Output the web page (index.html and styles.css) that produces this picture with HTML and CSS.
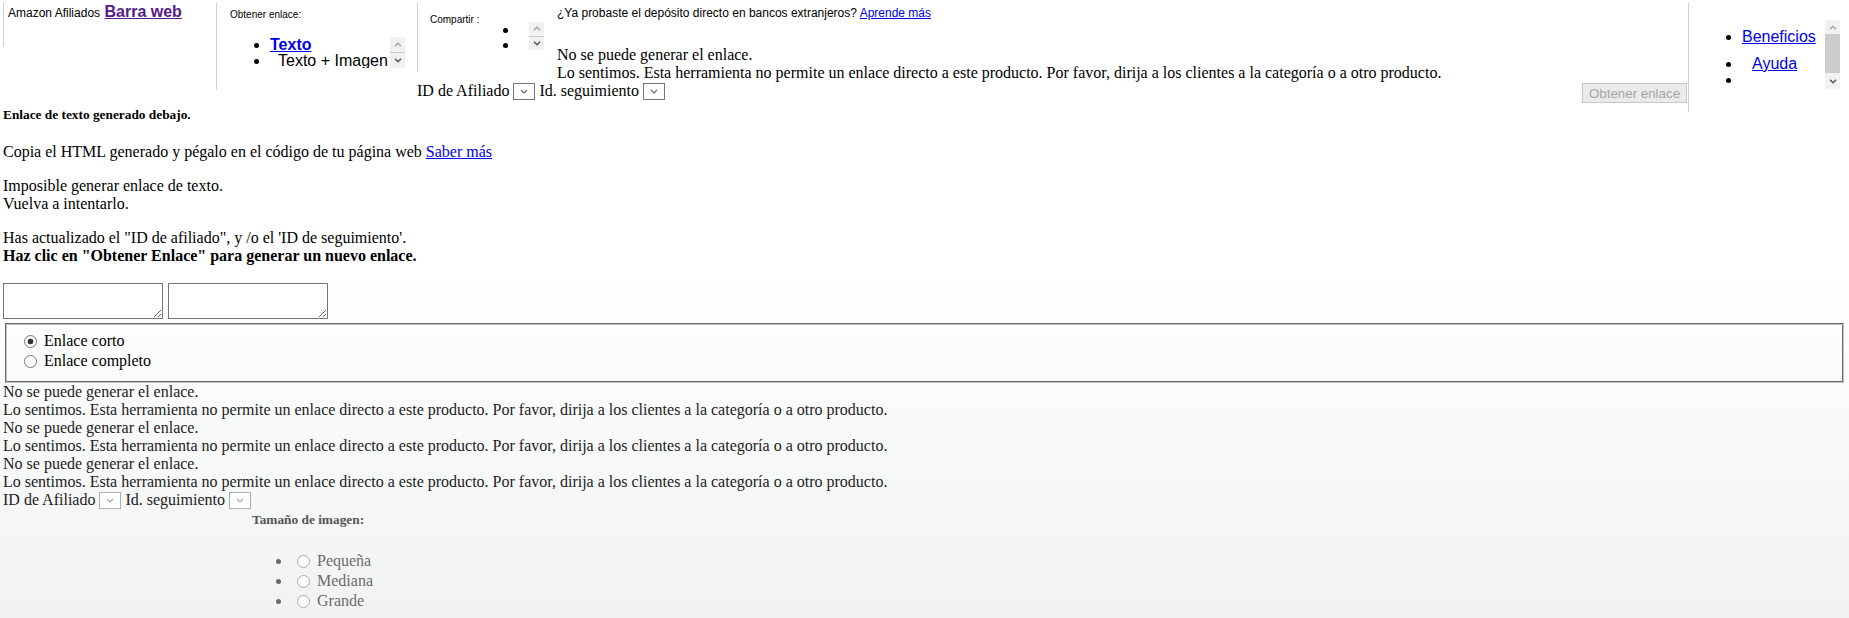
FILE: index.html
```html
<!DOCTYPE html>
<html lang="es">
<head>
    <meta charset="UTF-8">
    <meta name="viewport" content="width=device-width, initial-scale=1.0">
    <title>Amazon Afiliados - Barra web</title>
    <link rel="stylesheet" href="styles.css">
</head>
<body>
    <div class="topbar">
        <div class="cell brand">
            <span class="brand-name">Amazon Afiliados</span> <a class="brand-link" href="#">Barra web</a>
        </div>

        <div class="cell get">
            <div class="cell-label">Obtener enlace:</div>
            <div class="scroller get-list">
                <ul>
                    <li><a class="tab-active" href="#">Texto</a></li>
                    <li class="tab">Texto + Imagen</li>
                </ul>
                <div class="sbar">
                    <div class="sbar-btn"><svg width="8" height="5" viewBox="0 0 8 5"><polyline points="1,4.3 4,1.3 7,4.3" fill="none" stroke="#a3a3a3" stroke-width="1.4"/></svg></div>
                    <div class="sbar-sep"></div>
                    <div class="sbar-btn"><svg width="8" height="5" viewBox="0 0 8 5"><polyline points="1,0.8 4,3.8 7,0.8" fill="none" stroke="#505050" stroke-width="1.4"/></svg></div>
                </div>
            </div>
        </div>

        <div class="mid">
            <div class="mid-top">
                <div class="cell share">
                    <div class="cell-label">Compartir :</div>
                    <div class="scroller share-list">
                        <ul>
                            <li></li>
                            <li></li>
                        </ul>
                        <div class="sbar">
                            <div class="sbar-btn"><svg width="8" height="5" viewBox="0 0 8 5"><polyline points="1,4.3 4,1.3 7,4.3" fill="none" stroke="#a3a3a3" stroke-width="1.4"/></svg></div>
                            <div class="sbar-sep"></div>
                            <div class="sbar-btn"><svg width="8" height="5" viewBox="0 0 8 5"><polyline points="1,0.8 4,3.8 7,0.8" fill="none" stroke="#505050" stroke-width="1.4"/></svg></div>
                        </div>
                    </div>
                </div>
                <div class="notice">
                    <p class="promo">¿Ya probaste el depósito directo en bancos extranjeros? <a href="#">Aprende más</a></p>
                    <p class="notice-msg">No se puede generar el enlace.<br>Lo sentimos. Esta herramienta no permite un enlace directo a este producto. Por favor, dirija a los clientes a la categoría o a otro producto.</p>
                </div>
            </div>
            <div class="mid-bottom">
                <div class="ids">ID de Afiliado <span class="pick"><svg width="8" height="5" viewBox="0 0 8 5"><polyline points="1,1 4,4 7,1" fill="none" stroke="#6a6a6a" stroke-width="1.2"/></svg></span> Id. seguimiento <span class="pick"><svg width="8" height="5" viewBox="0 0 8 5"><polyline points="1,1 4,4 7,1" fill="none" stroke="#6a6a6a" stroke-width="1.2"/></svg></span></div>
                <button class="get-btn" disabled>Obtener enlace</button>
            </div>
        </div>

        <div class="cell more">
            <div class="scroller more-list">
                <ul>
                    <li><a href="#">Beneficios</a></li>
                    <li class="help"><a href="#">Ayuda</a></li>
                    <li class="blank"></li>
                </ul>
                <div class="sbar tall">
                    <div class="sbar-btn up"><svg width="8" height="5" viewBox="0 0 8 5"><polyline points="1,4.3 4,1.3 7,4.3" fill="none" stroke="#a3a3a3" stroke-width="1.4"/></svg></div>
                    <div class="sbar-thumb"></div>
                    <div class="sbar-btn down"><svg width="8" height="5" viewBox="0 0 8 5"><polyline points="1,0.8 4,3.8 7,0.8" fill="none" stroke="#505050" stroke-width="1.4"/></svg></div>
                </div>
            </div>
        </div>
    </div>

    <p class="generated">Enlace de texto generado debajo.</p>
    <p class="copy">Copia el HTML generado y pégalo en el código de tu página web <a href="#">Saber más</a></p>
    <p class="fail">Imposible generar enlace de texto.<br>Vuelva a intentarlo.</p>
    <p class="updated">Has actualizado el "ID de afiliado", y /o el 'ID de seguimiento'.<br><b>Haz clic en "Obtener Enlace" para generar un nuevo enlace.</b></p>

    <div class="codes">
        <textarea class="code"></textarea>
        <textarea class="code"></textarea>
    </div>

    <fieldset class="choice">
        <label class="choice-row"><input type="radio" name="kind" checked> Enlace corto</label>
        <label class="choice-row"><input type="radio" name="kind"> Enlace completo</label>
    </fieldset>

    <div class="errors">
        No se puede generar el enlace.<br>
        Lo sentimos. Esta herramienta no permite un enlace directo a este producto. Por favor, dirija a los clientes a la categoría o a otro producto.<br>
        No se puede generar el enlace.<br>
        Lo sentimos. Esta herramienta no permite un enlace directo a este producto. Por favor, dirija a los clientes a la categoría o a otro producto.<br>
        No se puede generar el enlace.<br>
        Lo sentimos. Esta herramienta no permite un enlace directo a este producto. Por favor, dirija a los clientes a la categoría o a otro producto.
        <div class="ids">ID de Afiliado <span class="pick faint"><svg width="8" height="5" viewBox="0 0 8 5"><polyline points="1,1 4,4 7,1" fill="none" stroke="#a8a8a8" stroke-width="1.2"/></svg></span> Id. seguimiento <span class="pick faint"><svg width="8" height="5" viewBox="0 0 8 5"><polyline points="1,1 4,4 7,1" fill="none" stroke="#a8a8a8" stroke-width="1.2"/></svg></span></div>
    </div>

    <div class="size">
        <div class="size-label">Tamaño de imagen:</div>
        <ul class="size-list">
            <li><label><input type="radio" name="size"> Pequeña</label></li>
            <li><label><input type="radio" name="size"> Mediana</label></li>
            <li><label><input type="radio" name="size"> Grande</label></li>
        </ul>
    </div>
</body>
</html>
```

FILE: styles.css
```css
html {
    min-height: 100%;
    background: linear-gradient(#ffffff 0, #ffffff 270px, #f1f3f3 618px) no-repeat #f1f3f3;
}

body {
    margin: 3px;
    font-family: "Liberation Serif", "Times New Roman", serif;
    font-size: 16px;
    color: #000;
}

a {
    color: #0000ee;
}

/* top strip */
.topbar {
    display: flex;
    align-items: flex-start;
    height: 104px;
}

.cell {
    box-sizing: border-box;
    border-left: 1px solid #d0d0d0;
    flex-shrink: 0;
}

.cell-label {
    font-family: "Liberation Sans", Arial, sans-serif;
    font-size: 10px;
    line-height: 12px;
}

.brand {
    width: 213px;
    height: 44px;
    padding-left: 4px;
    font-family: "Liberation Sans", Arial, sans-serif;
}

.brand-name {
    font-size: 12px;
}

.brand-link {
    font-size: 16px;
    font-weight: bold;
    color: #551a8b;
}

.get {
    width: 201px;
    height: 87px;
    padding: 6px 0 0 13px;
}

.scroller {
    display: flex;
    font-family: "Liberation Sans", Arial, sans-serif;
}

.scroller ul {
    flex: 1;
    margin: 0;
    padding-left: 40px;
    overflow: hidden;
    white-space: nowrap;
}

.get-list {
    width: 175px;
    height: 31px;
    margin-top: 16px;
}

.get-list li {
    line-height: 16px;
}

.tab-active {
    font-weight: bold;
}

.tab {
    padding-left: 8px;
}

.sbar {
    width: 15px;
    flex-shrink: 0;
    display: flex;
    flex-direction: column;
    background: #f1f1f1;
}

.sbar-btn {
    flex: 1;
    display: flex;
    align-items: center;
    justify-content: center;
}

.sbar-sep {
    height: 1px;
    background: #c9c9c9;
}

.sbar.tall .sbar-btn {
    flex: none;
}

.sbar.tall .up {
    height: 14px;
}

.sbar.tall .down {
    height: 16px;
}

.sbar-thumb {
    flex: 1;
    background: #cdcdcd;
}

.mid {
    width: 1271px;
    flex-shrink: 0;
}

.mid-top {
    display: flex;
    align-items: flex-start;
}

.share {
    width: 140px;
    height: 69px;
    padding-left: 12px;
    display: flex;
    align-items: flex-start;
}

.share .cell-label {
    padding-top: 11px;
}

.share-list {
    margin-top: 19px;
    height: 28px;
}

.share-list ul {
    width: 10px;
    flex: none;
}

.share-list li {
    line-height: 15px;
}

.notice {
    flex: 1;
    padding-top: 3px;
}

.promo {
    margin: 0;
    font-family: "Liberation Sans", Arial, sans-serif;
    font-size: 12px;
}

.notice-msg {
    margin: 26px 0 0;
}

.mid-bottom {
    display: flex;
    justify-content: space-between;
    align-items: flex-start;
}

.ids {
    line-height: normal;
}

.pick {
    display: inline-flex;
    align-items: center;
    justify-content: center;
    width: 20px;
    height: 15px;
    margin-top: 1px;
    border: 1px solid #767676;
    background: #fff;
    vertical-align: top;
}

.pick.faint {
    border-color: #b0b0b0;
}

.get-btn {
    width: 105px;
    height: 20px;
    margin: 1px 1px 0 0;
    padding: 0;
    border: 1px solid #c6c6c6;
    background: #ebebeb;
    color: #a4a4a4;
    font-family: "Liberation Sans", Arial, sans-serif;
    font-size: 13.33px;
}

.more {
    width: 158px;
    height: 109px;
    padding-left: 13px;
}

.more-list {
    width: 138px;
    height: 69px;
    margin-top: 17px;
}

.more-list ul {
    padding-top: 8px;
}

.more-list li {
    line-height: 18.4px;
}

.more-list li.help {
    margin-top: 8.6px;
    padding-left: 10px;
}

.more-list li.blank {
    line-height: 14px;
    height: 14px;
}

/* generated link area */
.generated {
    margin: 0;
    font-size: 13.33px;
    line-height: 15px;
    font-weight: bold;
}

.copy {
    margin: 21px 0 0;
}

.fail {
    margin: 16px 0 0;
}

.updated {
    margin: 16px 0 0;
}

.codes {
    display: flex;
    gap: 5px;
    margin-top: 18px;
}

.code {
    box-sizing: border-box;
    width: 160px;
    height: 36px;
    margin: 0;
    border: 1px solid #767676;
    background: #fff;
}

.choice {
    margin: 4px 2px 0;
    padding: 5.6px 12px 10px;
    border: 2px groove #c0c0c0;
}

.choice-row {
    display: block;
    line-height: 20px;
}

input[type="radio"] {
    appearance: none;
    box-sizing: border-box;
    width: 13px;
    height: 13px;
    margin: 3px 3px 0 5px;
    border: 1px solid #767676;
    border-radius: 50%;
    background: #fff;
    vertical-align: -2px;
}

input[type="radio"]:checked {
    background: radial-gradient(circle, #333 0 2.6px, #fff 3.2px);
}

.errors {
    color: #222;
}

.size {
    margin: 3px 0 0 249px;
    color: #6b6b6b;
}

.size-label {
    font-size: 13.33px;
    line-height: 15px;
    font-weight: bold;
    color: #555;
}

.size-list {
    margin: 24px 0 0;
    padding-left: 40px;
}

.size-list li {
    line-height: 20px;
}

.size-list input[type="radio"] {
    border-color: #aaa;
}
```
